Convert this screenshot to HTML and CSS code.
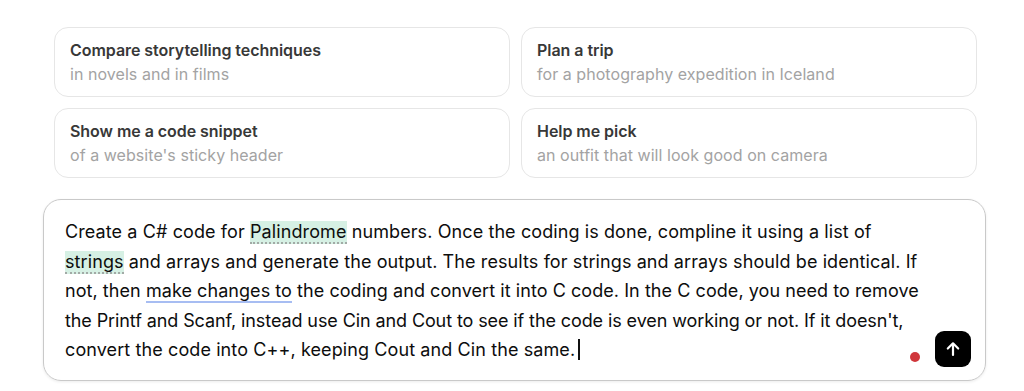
FILE: index.html
```html
<!DOCTYPE html>
<html>
<head>
<meta charset="utf-8">
<link rel="stylesheet" href="styles.css">
</head>
<body>
<div class="page">
  <div class="suggestions">
    <div class="card">
      <div class="card-title">Compare storytelling techniques</div>
      <div class="card-sub">in novels and in films</div>
    </div>
    <div class="card">
      <div class="card-title">Plan a trip</div>
      <div class="card-sub">for a photography expedition in Iceland</div>
    </div>
    <div class="card">
      <div class="card-title">Show me a code snippet</div>
      <div class="card-sub">of a website's sticky header</div>
    </div>
    <div class="card">
      <div class="card-title">Help me pick</div>
      <div class="card-sub">an outfit that will look good on camera</div>
    </div>
  </div>
  <div class="composer">
    <div class="prompt">Create a C# code for <span class="hl">Palindrome</span> numbers. Once the coding is done, compline it using a list of<br><span class="hl">strings</span> and arrays and generate the output. The results for strings and arrays should be identical. If<br><span class="tight-s">not, then <span class="ul">make changes to</span> the coding and convert it into C code. In the C code, you need to remove</span><br><span class="tight">the Printf and Scanf, instead use Cin and Cout to see if the code is even working or not. If it doesn't,</span><br>convert the code into C++, keeping Cout and Cin the same.<span class="caret"></span></div>
    <div class="controls">
      <span class="dot"></span>
      <button class="send" aria-label="Send">
        <svg width="20" height="20" viewBox="0 0 20 20" fill="none" stroke="#fff" stroke-width="2.2" stroke-linecap="round" stroke-linejoin="round"><path d="M10 16V4.5M4.8 9.5L10 4.3l5.2 5.2"/></svg>
      </button>
    </div>
  </div>
</div>
</body>
</html>
```
FILE: styles.css
```css
* { box-sizing: border-box; }
html, body { margin: 0; padding: 0; background: #fff; }
body { font-family: Inter, "Noto Sans", sans-serif; color: #0d0d0d; }
.page { width: 1024px; height: 391px; padding: 27px 38px 0 43px; }
.suggestions {
  display: grid;
  grid-template-columns: 456px 456px;
  column-gap: 11px;
  row-gap: 11px;
  margin: 0 0 21px 11px;
}
.card {
  border: 1px solid #e6e6e6;
  border-radius: 14px;
  padding: 10px 15px;
  height: 70px;
}
.card-title { font-size: 16px; line-height: 24px; font-weight: 600; color: #383838; letter-spacing: -0.05px; }
.card-sub { font-size: 16px; line-height: 24px; color: #a3a3a3; letter-spacing: 0.05px; }
.composer {
  position: relative;
  width: 943px;
  height: 182px;
  border: 1px solid #c9c9c9;
  border-radius: 18px;
  box-shadow: 0 1px 3px rgba(0,0,0,0.08);
  padding: 17px 20px 0 21px;
}
.prompt { font-size: 18px; line-height: 29.5px; color: #0d0d0d; letter-spacing: 0.1px; white-space: nowrap; }
.tight { letter-spacing: -0.1px; }
.tight-s { letter-spacing: 0.06px; }
.hl { background: #d6f0e4; border-bottom: 2px dotted #a2aaa6; }
.ul { border-bottom: 2px solid #a7bdf2; }
.caret { display: inline-block; width: 1.5px; height: 21px; background: #111; vertical-align: -4px; margin-left: 3px; }
.controls { position: absolute; right: 14px; bottom: 13px; display: flex; align-items: center; gap: 15px; }
.dot { width: 10px; height: 10px; border-radius: 50%; background: #d0363b; margin-top: 16px; }
.send { width: 36px; height: 36px; border-radius: 9px; border: 0; background: #000; display: flex; align-items: center; justify-content: center; padding: 0; }
```
